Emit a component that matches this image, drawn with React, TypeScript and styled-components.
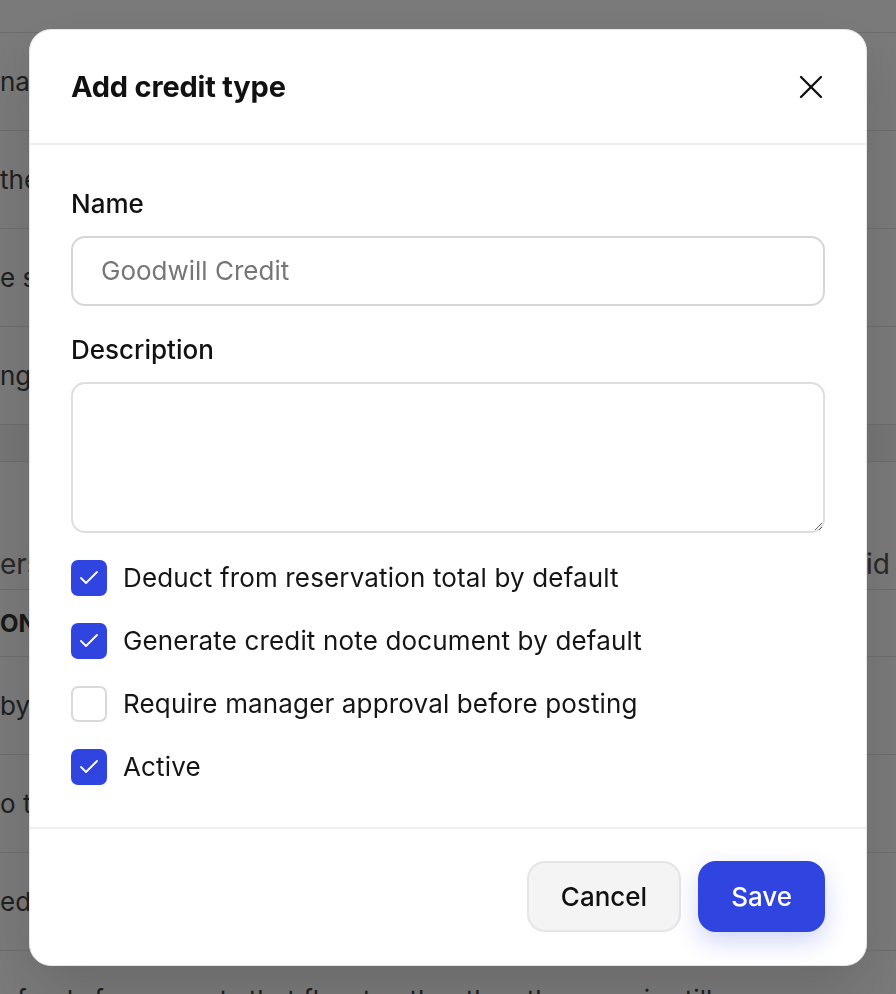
import React, { useState } from "react";
import styled, { createGlobalStyle } from "styled-components";
import { Check, X } from "lucide-react";

const GlobalStyle = createGlobalStyle`
  html, body {
    margin: 0;
    padding: 0;
    height: 100%;
    overflow: hidden;
  }
  body {
    font-family: Inter, "Noto Sans", "Liberation Sans", sans-serif;
    background: #fff;
    color: #111;
    -webkit-font-smoothing: antialiased;
  }
  * {
    box-sizing: border-box;
  }
`;

/* ---------- page behind the dialog ---------- */

const Page = styled.div`
  display: flex;
  flex-direction: column;
  height: 100vh;
  overflow: hidden;
  background: #fff;
`;

const ListRow = styled.div<{ $h?: number; $pad?: number }>`
  height: ${(p) => p.$h ?? 98}px;
  flex-shrink: 0;
  display: flex;
  align-items: center;
  justify-content: space-between;
  padding: 0 6px 0 ${(p) => p.$pad ?? 0}px;
  border-bottom: 1px solid #e4e4e4;
  font-size: 26px;
  color: #444;
  white-space: nowrap;
  overflow: hidden;
`;

const SectionGap = styled.div`
  height: 37px;
  flex-shrink: 0;
  background: #f7f7f7;
  border-bottom: 1px solid #e4e4e4;
`;

const SectionHeader = styled(ListRow)`
  align-items: flex-end;
  padding-bottom: 8px;
  font-size: 28px;
  color: #555;
`;

const TableHead = styled(ListRow)`
  font-size: 24px;
  font-weight: 700;
  color: #333;
  text-transform: uppercase;
`;

const Overlay = styled.div`
  position: fixed;
  inset: 0;
  background: rgba(0, 0, 0, 0.52);
  display: flex;
  align-items: center;
  justify-content: center;
`;

/* ---------- dialog ---------- */

const Dialog = styled.div`
  width: 838px;
  background: #fff;
  border: 1px solid #e6e6e6;
  border-radius: 22px;
  display: flex;
  flex-direction: column;
  overflow: hidden;
  box-shadow: 0 24px 60px rgba(0, 0, 0, 0.14);
`;

const Header = styled.div`
  height: 115px;
  display: flex;
  align-items: center;
  justify-content: space-between;
  padding: 1px 41px 0;
  border-bottom: 2px solid #efefef;
`;

const Title = styled.h2`
  margin: 0;
  font-size: 29px;
  font-weight: 700;
  letter-spacing: -0.2px;
  color: #111;
`;

const CloseButton = styled.button`
  width: 40px;
  height: 40px;
  margin-right: -6px;
  padding: 0;
  border: 0;
  background: none;
  color: #111;
  display: flex;
  align-items: center;
  justify-content: center;
  cursor: pointer;
`;

const Body = styled.div`
  padding: 44px 41px 42px;
  display: flex;
  flex-direction: column;
`;

const Field = styled.div`
  display: flex;
  flex-direction: column;
  gap: 17px;
  margin-bottom: 29px;
`;

const Label = styled.label`
  font-size: 26px;
  line-height: 30px;
  font-weight: 500;
  color: #111;
`;

const TextInput = styled.input`
  height: 70px;
  padding: 0 28px;
  border: 2px solid #d6d6d6;
  border-radius: 14px;
  font-family: inherit;
  font-size: 26px;
  color: #111;
  outline: none;
  &::placeholder {
    color: #767676;
  }
`;

const TextArea = styled.textarea`
  height: 151px;
  padding: 18px 28px;
  border: 2px solid #dedede;
  border-radius: 14px;
  font-family: inherit;
  font-size: 26px;
  color: #111;
  outline: none;
  resize: vertical;
`;

const Options = styled.div`
  display: flex;
  flex-direction: column;
  gap: 27px;
  margin-top: -2px;
`;

const OptionRow = styled.label`
  display: flex;
  align-items: center;
  gap: 16px;
  height: 36px;
  font-size: 26px;
  color: #151515;
  letter-spacing: 0.15px;
  cursor: pointer;
`;

const Box = styled.span<{ $on: boolean }>`
  width: 36px;
  height: 36px;
  flex-shrink: 0;
  border-radius: 7px;
  display: flex;
  align-items: center;
  justify-content: center;
  color: #fff;
  background: ${(p) => (p.$on ? "#3044e0" : "#fff")};
  border: 2px solid ${(p) => (p.$on ? "#3044e0" : "#d9d9d9")};
`;

const Footer = styled.div`
  display: flex;
  justify-content: flex-end;
  gap: 17px;
  padding: 32px 41px 33px;
  border-top: 2px solid #efefef;
`;

const Button = styled.button<{ $primary?: boolean }>`
  height: 71px;
  padding: 0 ${(p) => (p.$primary ? 31 : 32)}px;
  border-radius: 18px;
  font-family: inherit;
  font-size: 26px;
  font-weight: 500;
  cursor: pointer;
  color: ${(p) => (p.$primary ? "#fff" : "#111")};
  background: ${(p) => (p.$primary ? "#3044e0" : "#f4f4f4")};
  border: 2px solid ${(p) => (p.$primary ? "#3044e0" : "#e5e5e5")};
  box-shadow: ${(p) => (p.$primary ? "0 10px 24px rgba(48, 68, 224, 0.22)" : "none")};
`;

const options = [
  { id: "deduct", label: "Deduct from reservation total by default", on: true },
  { id: "note", label: "Generate credit note document by default", on: true },
  { id: "approval", label: "Require manager approval before posting", on: false },
  { id: "active", label: "Active", on: true },
];

const App: React.FC = () => {
  const [checked, setChecked] = useState<Record<string, boolean>>(
    Object.fromEntries(options.map((o) => [o.id, o.on]))
  );

  const toggle = (id: string) => setChecked({ ...checked, [id]: !checked[id] });

  return (
    <>
      <GlobalStyle />
      <Page>
        <ListRow $h={33} />
        <ListRow>name</ListRow>
        <ListRow>the</ListRow>
        <ListRow>e stay</ListRow>
        <ListRow>ng</ListRow>
        <SectionGap />
        <SectionHeader $h={128}>
          <span>ers</span>
          <span>id</span>
        </SectionHeader>
        <TableHead $h={67}>ON</TableHead>
        <ListRow>by the</ListRow>
        <ListRow>o the</ListRow>
        <ListRow>ed</ListRow>
        <ListRow $pad={17}>funds for amounts that flow to other than the room is still open</ListRow>
      </Page>

      <Overlay>
        <Dialog role="dialog" aria-labelledby="dlg-title">
          <Header>
            <Title id="dlg-title">Add credit type</Title>
            <CloseButton aria-label="Close">
              <X size={40} strokeWidth={1.4} />
            </CloseButton>
          </Header>

          <Body>
            <Field>
              <Label htmlFor="ct-name">Name</Label>
              <TextInput id="ct-name" placeholder="Goodwill Credit" />
            </Field>
            <Field>
              <Label htmlFor="ct-desc">Description</Label>
              <TextArea id="ct-desc" />
            </Field>

            <Options>
              {options.map((o) => (
                <OptionRow key={o.id} onClick={() => toggle(o.id)}>
                  <Box $on={checked[o.id]}>
                    {checked[o.id] && <Check size={24} strokeWidth={1.8} />}
                  </Box>
                  {o.label}
                </OptionRow>
              ))}
            </Options>
          </Body>

          <Footer>
            <Button>Cancel</Button>
            <Button $primary>Save</Button>
          </Footer>
        </Dialog>
      </Overlay>
    </>
  );
};

export default App;
